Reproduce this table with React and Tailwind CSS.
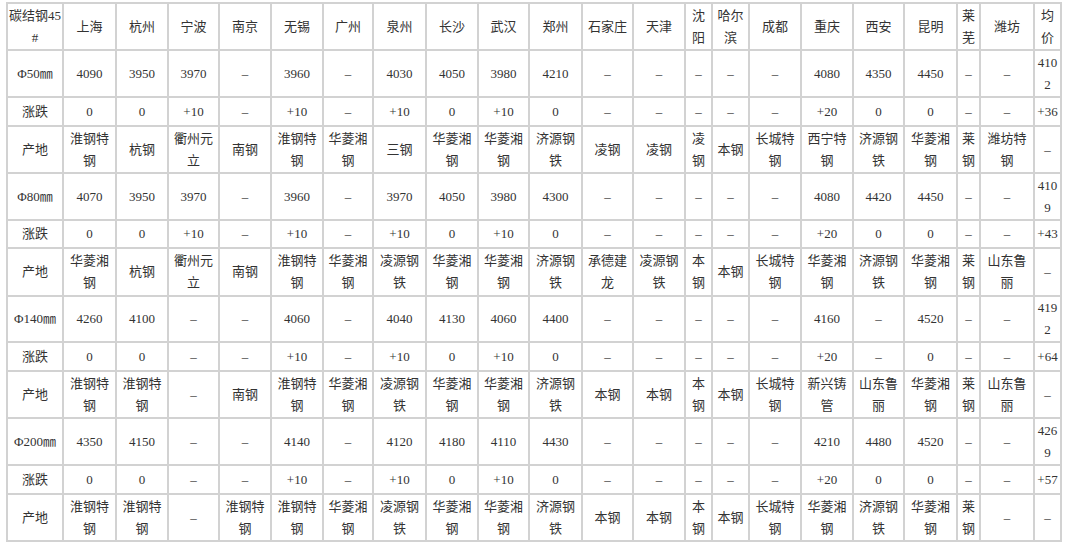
import React from 'react'

const widths = [56, 53, 52, 51, 52, 52, 50, 53, 52, 51, 53, 51, 52, 27, 37, 52, 52, 51, 53, 23, 54, 27]

const header = ['碳结钢45|#', '上海', '杭州', '宁波', '南京', '无锡', '广州', '泉州', '长沙', '武汉', '郑州', '石家庄', '天津', '沈|阳', '哈尔|滨', '成都', '重庆', '西安', '昆明', '莱|芜', '潍坊', '均|价']

const D = '–'

const rows = [
    { h: 47, cells: ['Φ50㎜', '4090', '3950', '3970', D, '3960', D, '4030', '4050', '3980', '4210', D, D, D, D, D, '4080', '4350', '4450', D, D, '410|2'] },
    { h: 29, cells: ['涨跌', '0', '0', '+10', D, '+10', D, '+10', '0', '+10', '0', D, D, D, D, D, '+20', '0', '0', D, D, '+36'] },
    { h: 47, cells: ['产地', '淮钢特|钢', '杭钢', '衢州元|立', '南钢', '淮钢特|钢', '华菱湘|钢', '三钢', '华菱湘|钢', '华菱湘|钢', '济源钢|铁', '凌钢', '凌钢', '凌|钢', '本钢', '长城特|钢', '西宁特|钢', '济源钢|铁', '华菱湘|钢', '莱|钢', '潍坊特|钢', D] },
    { h: 47, cells: ['Φ80㎜', '4070', '3950', '3970', D, '3960', D, '3970', '4050', '3980', '4300', D, D, D, D, D, '4080', '4420', '4450', D, D, '410|9'] },
    { h: 28, cells: ['涨跌', '0', '0', '+10', D, '+10', D, '+10', '0', '+10', '0', D, D, D, D, D, '+20', '0', '0', D, D, '+43'] },
    { h: 48, cells: ['产地', '华菱湘|钢', '杭钢', '衢州元|立', '南钢', '淮钢特|钢', '华菱湘|钢', '凌源钢|铁', '华菱湘|钢', '华菱湘|钢', '济源钢|铁', '承德建|龙', '凌源钢|铁', '本|钢', '本钢', '长城特|钢', '华菱湘|钢', '济源钢|铁', '华菱湘|钢', '莱|钢', '山东鲁|丽', D] },
    { h: 46, cells: ['Φ140㎜', '4260', '4100', D, D, '4060', D, '4040', '4130', '4060', '4400', D, D, D, D, D, '4160', D, '4520', D, D, '419|2'] },
    { h: 29, cells: ['涨跌', '0', '0', D, D, '+10', D, '+10', '0', '+10', '0', D, D, D, D, D, '+20', D, '0', D, D, '+64'] },
    { h: 47, cells: ['产地', '淮钢特|钢', '淮钢特|钢', D, '南钢', '淮钢特|钢', '华菱湘|钢', '凌源钢|铁', '华菱湘|钢', '华菱湘|钢', '济源钢|铁', '本钢', '本钢', '本|钢', '本钢', '长城特|钢', '新兴铸|管', '山东鲁|丽', '华菱湘|钢', '莱|钢', '山东鲁|丽', D] },
    { h: 47, cells: ['Φ200㎜', '4350', '4150', D, D, '4140', D, '4120', '4180', '4110', '4430', D, D, D, D, D, '4210', '4480', '4520', D, D, '426|9'] },
    { h: 29, cells: ['涨跌', '0', '0', D, D, '+10', D, '+10', '0', '+10', '0', D, D, D, D, D, '+20', '0', '0', D, D, '+57'] },
    { h: 47, cells: ['产地', '淮钢特|钢', '淮钢特|钢', D, '淮钢特|钢', '淮钢特|钢', '华菱湘|钢', '凌源钢|铁', '华菱湘|钢', '华菱湘|钢', '济源钢|铁', '本钢', '本钢', '本|钢', '本钢', '长城特|钢', '华菱湘|钢', '济源钢|铁', '华菱湘|钢', '莱|钢', D, D] },
]

const Cell = ({ text }) => {
    const lines = text.split('|')
    return (
        <td className="border-2 border-[#d2d2d2] p-0 text-center align-middle whitespace-nowrap overflow-visible">
            {lines.map((l, i) => (
                <React.Fragment key={i}>
                    {i > 0 && <br />}
                    {l}
                </React.Fragment>
            ))}
        </td>
    )
}

export default function App() {
    return (
        <div className="w-[1078px] h-[555px] bg-white pt-[2px] pl-[6px] overflow-hidden">
            <table className="table-fixed border-collapse w-[1056px] text-[13px] leading-[22px] text-[#333] font-['Liberation_Serif','Noto_Sans_CJK_SC',serif]">
                <colgroup>
                    {widths.map((w, i) => (
                        <col key={i} style={{ width: w }} />
                    ))}
                </colgroup>
                <tbody>
                    <tr className="h-[47px]">
                        {header.map((t, i) => (
                            <Cell key={i} text={t} />
                        ))}
                    </tr>
                    {rows.map((r, ri) => (
                        <tr key={ri} style={{ height: r.h }}>
                            {r.cells.map((t, i) => (
                                <Cell key={i} text={t} />
                            ))}
                        </tr>
                    ))}
                </tbody>
            </table>
        </div>
    )
}
